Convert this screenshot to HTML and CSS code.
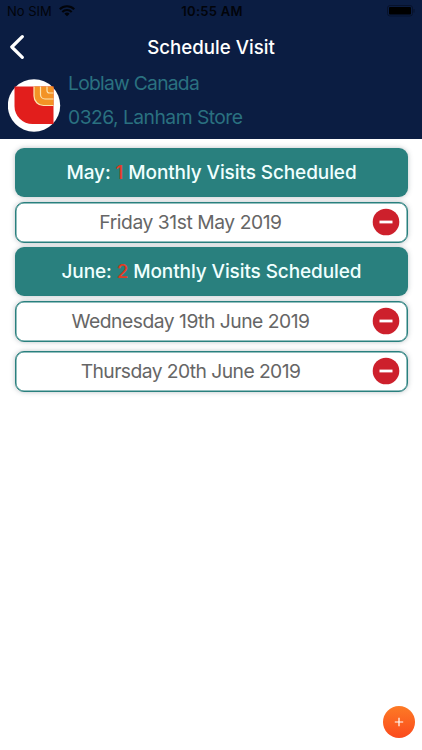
FILE: index.html
```
<!DOCTYPE html>
<html lang="en">
<head>
    <meta charset="UTF-8">
    <meta name="viewport" content="width=device-width, initial-scale=1.0">
    <title>Schedule Visit</title>
    <link rel="stylesheet" href="styles.css">
</head>
<body>
    <div class="app">
        <header class="header">
            <!-- status bar -->
            <div class="status">
                <div class="carrier">
                    <span>No SIM</span>
                    <svg width="16" height="12" viewBox="0 0 16 12" fill="none" stroke="#02040a" stroke-width="2.1">
                        <path d="M.8 4.3a10.2 10.2 0 0 1 14.4 0M3.3 7a6.6 6.6 0 0 1 9.4 0"/>
                        <path d="M8 11.3L5.4 8.8a3.7 3.7 0 0 1 5.2 0z" fill="#02040a" stroke="none"/>
                    </svg>
                </div>
                <span class="time">10:55 AM</span>
                <div class="battery">
                    <svg width="28" height="12" viewBox="0 0 28 12">
                        <rect x=".5" y=".5" width="25" height="10.5" rx="2.5" fill="none" stroke="#07122c"/>
                        <rect x="2" y="2" width="22" height="7.5" rx="1" fill="#000"/>
                        <path d="M27 4v3.5" stroke="#07122c"/>
                    </svg>
                </div>
            </div>
            <div class="nav">
                <svg class="back" width="16" height="26" viewBox="0 0 16 26" fill="none" stroke="#fff" stroke-width="3.2" stroke-linecap="round" stroke-linejoin="round">
                    <path d="M14.3 2.7L3.8 13l10.5 10.3"/>
                </svg>
                <h1>Schedule Visit</h1>
            </div>
            <div class="store">
                <svg class="logo" width="53" height="53" viewBox="0 0 53 53">
                    <circle cx="26" cy="26.5" r="26.2" fill="#fff"/>
                    <path d="M6.5 7.5h39V45H24.5a18 18 0 0 1-18-18z" fill="#e21e1c"/>
                    <path d="M26 7.5h19.5v19H35.5a9.5 9.5 0 0 1-9.5-9.5z" fill="#f39325"/>
                    <g fill="none" stroke="#fde3b0" stroke-width="1.2">
                        <path d="M26 7.5V17a9.5 9.5 0 0 0 9.5 9.5h10"/>
                        <path d="M32.5 7.5v8a4.5 4.5 0 0 0 4.5 4.5h8.5"/>
                        <path d="M39 7.5v4a2.500 2.500 0 0 0 2.500 2.500h4"/>
                    </g>
                </svg>
                <div class="store-info">
                    <p class="chain">Loblaw Canada</p>
                    <p class="branch">0326, Lanham Store</p>
                </div>
            </div>
        </header>

        <main class="visits">
            <h2 class="month">May: <b>1</b> Monthly Visits Scheduled</h2>
            <div class="visit">
                <span class="date friday">Friday 31st May 2019</span>
                <svg class="remove" width="28" height="28" viewBox="0 0 28 28">
                    <circle cx="14" cy="14" r="13.3" fill="#cd202c"/>
                    <path d="M7.5 14h13" stroke="#fff" stroke-width="2.8"/>
                </svg>
            </div>
            <h2 class="month">June: <b>2</b> Monthly Visits Scheduled</h2>
            <div class="visit">
                <span class="date wednesday">Wednesday 19th June 2019</span>
                <svg class="remove" width="28" height="28" viewBox="0 0 28 28">
                    <circle cx="14" cy="14" r="13.3" fill="#cd202c"/>
                    <path d="M7.5 14h13" stroke="#fff" stroke-width="2.8"/>
                </svg>
            </div>
            <div class="visit last">
                <span class="date thursday">Thursday 20th June 2019</span>
                <svg class="remove" width="28" height="28" viewBox="0 0 28 28">
                    <circle cx="14" cy="14" r="13.3" fill="#cd202c"/>
                    <path d="M7.5 14h13" stroke="#fff" stroke-width="2.8"/>
                </svg>
            </div>
        </main>

        <!-- add button -->
        <button class="add" aria-label="Add visit">
            <svg width="10" height="10" viewBox="0 0 10 10" stroke="#fff" stroke-width="1.2">
                <path d="M5 .8v8.4M.8 5h8.4"/>
            </svg>
        </button>
    </div>
</body>
</html>
```
FILE: styles.css
```
*{
    margin: 0;
    padding: 0;
    box-sizing: border-box;
}

body{
    font-family: Inter, "Liberation Sans", sans-serif;
    background-color: #fff;
}

.app{
    position: relative;
    height: 750px;
    overflow: hidden;
}

.header{
    height: 139px;
    background-color: #0b1d42;
}

/* status bar */
.status{
    display: grid;
    grid-template-columns: 1fr auto 1fr;
    align-items: center;
    height: 23px;
    padding: 0 7px;
    color: #02040a;
    font-size: 13px;
    line-height: 22px;
}

.carrier{
    display: flex;
    align-items: center;
    gap: 7px;
    padding-bottom: 1px;
}

.time{
    padding: 0 0 1px 2px;
    font-weight: 600;
    letter-spacing: .25px;
}

.battery{
    display: flex;
    justify-content: flex-end;
    padding-bottom: 1px;
}

.nav{
    display: grid;
    grid-template-columns: 40px 1fr 40px;
    align-items: center;
    height: 48px;
}

.back{
    margin-left: 8px;
}

.nav h1{
    padding-top: 2px;
    color: #fff;
    font-size: 18.7px;
    font-weight: 500;
    line-height: 24px;
    text-align: center;
}

.store{
    display: flex;
    gap: 7px;
    padding: 0 8px;
}

.logo{
    margin-top: 8px;
}

.store-info{
    color: #2a7180;
    font-size: 19.3px;
    line-height: 34px;
    margin-top: -5px;
}

.chain{
    letter-spacing: -.75px;
}

.branch{
    letter-spacing: -.53px;
}

/* list of visits */
.visits{
    padding: 9px 14px 0 15px;
}

.month{
    height: 49px;
    border-radius: 9px;
    background-color: #29807e;
    color: #f0ffff;
    font-size: 19px;
    font-weight: 500;
    line-height: 49px;
    letter-spacing: -.1px;
    text-align: center;
    box-shadow: 0 0 5px rgba(60, 80, 90, .35);
}

.month b{
    color: #e23b24;
    font-weight: 500;
}

.visit{
    display: flex;
    align-items: center;
    height: 41px;
    margin: 5px 0 4px;
    padding: 0 7px 1px 0;
    border: 1px solid #29807e;
    border-radius: 9px;
    background-color: #fff;
    box-shadow: 0 0 5px rgba(60, 80, 90, .35), inset 0 0 0 .5px #29807e;
}

.visit.last{
    margin-top: 9px;
}

.date{
    flex: 1;
    padding: 0 7px 1px 0;
    color: #666;
    font-size: 19.3px;
    line-height: 36px;
    text-align: center;
}

.friday{
    letter-spacing: -.45px;
}

.wednesday{
    letter-spacing: -.5px;
}

.thursday{
    letter-spacing: -.57px;
}

.add{
    position: absolute;
    right: 7px;
    bottom: 12px;
    display: flex;
    align-items: center;
    justify-content: center;
    width: 32px;
    height: 32px;
    border: none;
    border-radius: 50%;
    background: linear-gradient(#fd7a25, #fb4a1d);
}
```
